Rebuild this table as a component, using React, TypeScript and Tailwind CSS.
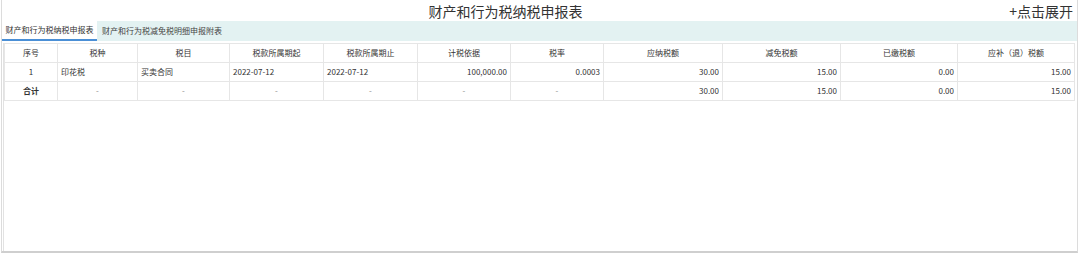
const cols = [
  { label: "序号", w: "w-[53px]" },
  { label: "税种", w: "w-[80px]" },
  { label: "税目", w: "w-[92px]" },
  { label: "税款所属期起", w: "w-[94px]" },
  { label: "税款所属期止", w: "w-[94px]" },
  { label: "计税依据", w: "w-[93px]" },
  { label: "税率", w: "w-[93px]" },
  { label: "应纳税额", w: "w-[119px]" },
  { label: "减免税额", w: "w-[118px]" },
  { label: "已缴税额", w: "w-[117px]" },
  { label: "应补（退）税额", w: "w-[117px]" },
]

const cell = "h-[19px] border border-[#e6e6e6] px-[3px] leading-none"

export default function App() {
  return (
    <div className="w-[1080px] h-[254px] bg-white text-[#333] font-['Noto_Sans_CJK_SC','Noto_Sans',sans-serif]">
      <div className="ml-px mr-[2px] h-[253px] flex flex-col border-x border-b-2 border-x-[#dcdcdc] border-b-[#cfcfcf]">
        <div className="h-[21px] flex items-center">
          <div className="flex-1 text-center text-[14px] leading-none">财产和行为税纳税申报表</div>
          <div className="pr-[4px] text-[14px] leading-none">+点击展开</div>
        </div>

        <div className="h-[20px] bg-[#e3f2f2] flex items-stretch text-[8px]">
          <div className="w-[95px] bg-white border-b-2 border-[#4a8fd6] flex items-center justify-center">
            财产和行为税纳税申报表
          </div>
          <div className="px-[5px] flex items-center text-[#444]">财产和行为税减免税明细申报附表</div>
        </div>

        <div className="flex-1 ml-px mt-[2px] border-l border-[#e2e2e2]">
          <table className="border-collapse text-[8px] table-fixed w-[1070px]">
            <thead>
              <tr>
                {cols.map((c) => (
                  <th key={c.label} className={`${cell} ${c.w} font-normal text-center`}>
                    {c.label}
                  </th>
                ))}
              </tr>
            </thead>
            <tbody>
              <tr>
                <td className={`${cell} text-center`}>1</td>
                <td className={`${cell} text-left`}>印花税</td>
                <td className={`${cell} text-left`}>买卖合同</td>
                <td className={`${cell} text-left`}>2022-07-12</td>
                <td className={`${cell} text-left`}>2022-07-12</td>
                <td className={`${cell} text-right`}>100,000.00</td>
                <td className={`${cell} text-right`}>0.0003</td>
                <td className={`${cell} text-right`}>30.00</td>
                <td className={`${cell} text-right`}>15.00</td>
                <td className={`${cell} text-right`}>0.00</td>
                <td className={`${cell} text-right`}>15.00</td>
              </tr>
              <tr>
                <td className={`${cell} text-center font-bold`}>合计</td>
                <td className={`${cell} text-center text-[#888]`}>-</td>
                <td className={`${cell} text-center text-[#888]`}>-</td>
                <td className={`${cell} text-center text-[#888]`}>-</td>
                <td className={`${cell} text-center text-[#888]`}>-</td>
                <td className={`${cell} text-center text-[#888]`}>-</td>
                <td className={`${cell} text-center text-[#888]`}>-</td>
                <td className={`${cell} text-right`}>30.00</td>
                <td className={`${cell} text-right`}>15.00</td>
                <td className={`${cell} text-right`}>0.00</td>
                <td className={`${cell} text-right`}>15.00</td>
              </tr>
            </tbody>
          </table>
        </div>
      </div>
    </div>
  )
}
